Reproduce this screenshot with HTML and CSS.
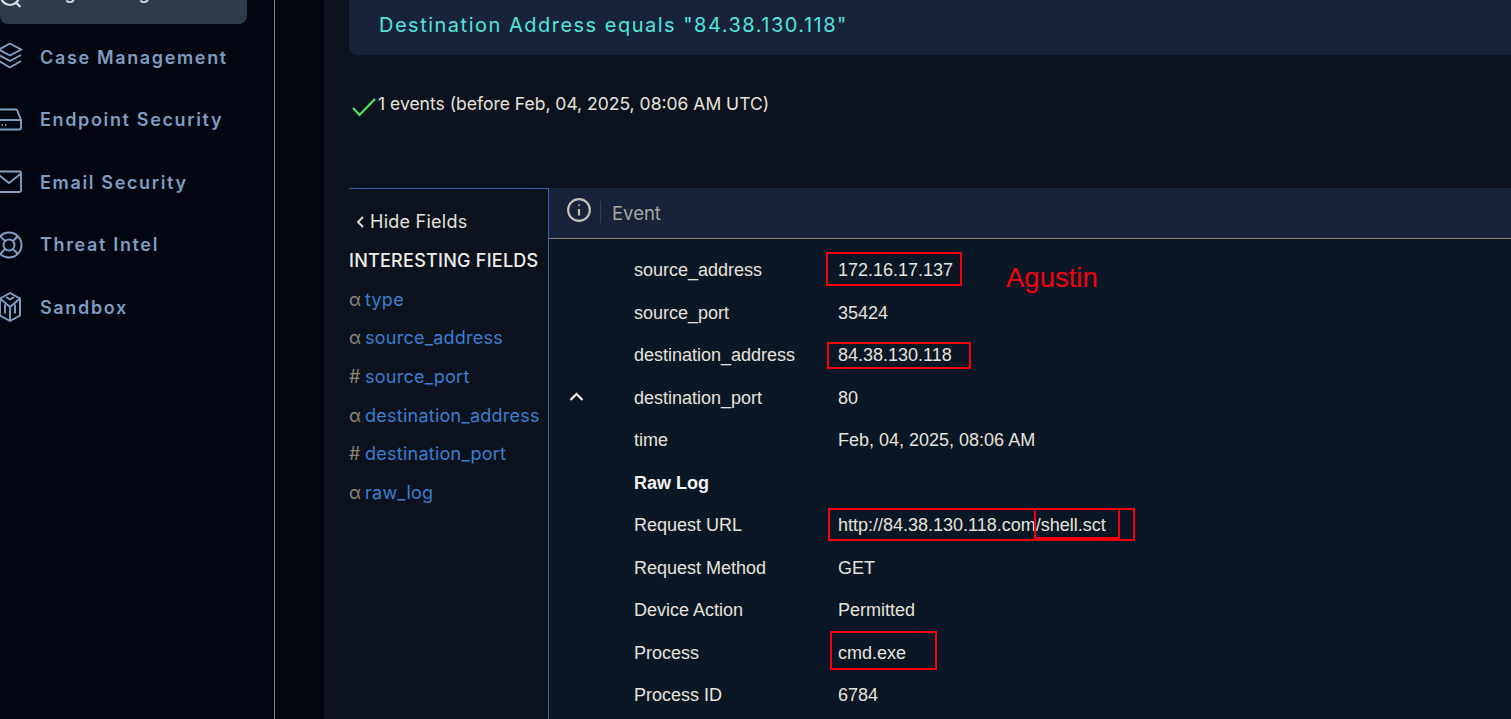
FILE: index.html
```html
<!DOCTYPE html>
<html lang="en">
<head>
<meta charset="utf-8">
<title>Log Management</title>
<link rel="stylesheet" href="styles.css">
</head>
<body>
<div class="app">
  <aside class="sidebar">
    <nav class="nav">
      <a class="nav-item active">
        <svg class="nav-icon" viewBox="-2 -15 24 30"><circle cx="10" cy="3" r="9"/><path d="M16 9.500l4.500 4.500"/></svg>
        <span>Log Management</span>
      </a>
      <a class="nav-item">
        <svg class="nav-icon" viewBox="-2 -15 24 30"><path d="M10-13.500l11 6-11 6-11-6z"/><path d="M21-2l-11 6-11-6"/><path d="M21 4l-11 6.500L-1 4"/></svg>
        <span>Case Management</span>
      </a>
      <a class="nav-item">
        <svg class="nav-icon" viewBox="-2 -15 24 30"><path d="M-2-10.500h17.500q1.500 0 2 1.500l3.500 9v7.500q0 2-2 2H-2"/><path d="M-2 0h23"/><path d="M1.500 5h1.200M5 5h1.200"/></svg>
        <span>Endpoint Security</span>
      </a>
      <a class="nav-item">
        <svg class="nav-icon" viewBox="-2 -15 24 30"><path d="M-2-10.500h21.500q1.500 0 1.500 1.500v17.500q0 1.500-1.500 1.500H-2"/><path d="M-2-7.500L9 1l11.500-9"/></svg>
        <span>Email Security</span>
      </a>
      <a class="nav-item">
        <svg class="nav-icon" viewBox="-2 -15 24 30"><circle cx="9" cy="0" r="12.500"/><circle cx="9" cy="0" r="5.500"/><path d="M0-9l5 5M18-9l-5 5M0 9l5-5M18 9l-5-5"/></svg>
        <span>Threat Intel</span>
      </a>
      <a class="nav-item">
        <svg class="nav-icon" viewBox="-2 -15 24 30"><path d="M10-14l10 5.500V8.500L10 14 0 8.500V-8.500z"/><path d="M0-8.500L10 0l10-8.500M10 0v14"/><path d="M5-2.500v9M15-2.500v9M6-10l4 2.500 4-2.500"/></svg>
        <span>Sandbox</span>
      </a>
    </nav>
  </aside>
  <div class="gutter"></div>
  <main class="main">
    <div class="query">Destination Address equals "84.38.130.118"</div>
    <div class="status">
      <svg class="check" viewBox="0 0 26 20"><path d="M2 11l6.500 7L24 2"/></svg>
      <span>1 events (before Feb, 04, 2025, 08:06 AM UTC)</span>
    </div>
    <section class="results">
      <div class="fields">
        <div class="field-row hide"><svg class="chev" viewBox="0 0 10 14"><path d="M8 2L3 7l5 5"/></svg>Hide Fields</div>
        <div class="field-row heading">INTERESTING FIELDS</div>
        <div class="field-row"><i class="kind">α</i><a>type</a></div>
        <div class="field-row"><i class="kind">α</i><a>source_address</a></div>
        <div class="field-row"><i class="kind">#</i><a>source_port</a></div>
        <div class="field-row"><i class="kind">α</i><a>destination_address</a></div>
        <div class="field-row"><i class="kind">#</i><a>destination_port</a></div>
        <div class="field-row"><i class="kind">α</i><a>raw_log</a></div>
      </div>
      <div class="event">
        <div class="event-head">
          <svg class="info" viewBox="0 0 24 24"><circle cx="12" cy="12" r="10"/><path d="M12 11v6M12 7v1"/></svg>
          <span class="event-sep"></span>
          <span class="event-title">Event</span>
        </div>
        <div class="event-body">
          <div class="toggle"><svg viewBox="0 0 16 10"><path d="M2 8l6-6 6 6"/></svg></div>
          <dl class="rows">
            <div class="row"><dt>source_address</dt><dd>172.16.17.137</dd></div>
            <div class="row"><dt>source_port</dt><dd>35424</dd></div>
            <div class="row"><dt>destination_address</dt><dd>84.38.130.118</dd></div>
            <div class="row"><dt>destination_port</dt><dd>80</dd></div>
            <div class="row"><dt>time</dt><dd>Feb, 04, 2025, 08:06 AM</dd></div>
            <div class="row"><dt class="strong">Raw Log</dt><dd></dd></div>
            <div class="row"><dt>Request URL</dt><dd>http://84.38.130.118.com/shell.sct</dd></div>
            <div class="row"><dt>Request Method</dt><dd>GET</dd></div>
            <div class="row"><dt>Device Action</dt><dd>Permitted</dd></div>
            <div class="row"><dt>Process</dt><dd>cmd.exe</dd></div>
            <div class="row"><dt>Process ID</dt><dd>6784</dd></div>
          </dl>
        </div>
      </div>
    </section>
  </main>
</div>
<div class="mark m1"></div>
<div class="mark m2"></div>
<div class="mark m3"></div>
<div class="mark m4"></div>
<div class="mark m5"></div>
<div class="note">Agustin</div>
</body>
</html>
```
FILE: styles.css
```css
* { box-sizing: border-box; }
html, body { margin: 0; height: 100%; overflow: hidden; background: #03060f; }
body { position: relative; font-family: Inter, "Liberation Sans", sans-serif; }

.app { display: flex; height: 719px; overflow: hidden; }

.sidebar {
  width: 275px;
  flex: none;
  background: #020611;
  border-right: 1px solid #8c8271;
}
.nav { margin-top: -39px; display: flex; flex-direction: column; }
.nav-item {
  display: flex;
  align-items: center;
  gap: 18px;
  height: 62.500px;
  width: 247px;
  color: #7f9dc0;
  font-size: 18px;
  font-weight: 600;
  letter-spacing: 1.650px;
  white-space: nowrap;
}
.nav-item.active {
  height: 63px;
  margin-bottom: 2px;
  background: #2f3b49;
  border-radius: 0 0 8px 8px;
  color: #c3d0de;
}
.nav-icon {
  width: 24px;
  height: 30px;
  margin-left: -2px;
  flex: none;
  overflow: visible;
  fill: none;
  stroke: #83a1c4;
  stroke-width: 1.900;
}
.active .nav-icon { stroke: #d5dde6; stroke-width: 2.200; }

.gutter { width: 49px; flex: none; background: #03060f; }

.main { flex: 1; min-width: 0; background: #0d131e; padding-left: 25px; }

.query {
  height: 55px;
  padding: 11px 0 0 30px;
  background: #18233a;
  border-radius: 0 0 0 8px;
  color: #52e6db;
  font-size: 20px;
  line-height: 28px;
  letter-spacing: 1.500px;
}

.status {
  display: flex;
  align-items: center;
  height: 24px;
  margin-top: 36px;
  color: #e6e3dc;
  font-size: 17.500px;
}
.check {
  width: 26px;
  height: 20px;
  margin: 8px 1px 0 2px;
  flex: none;
  fill: none;
  stroke: #4ee45e;
  stroke-width: 2.200;
}

.results { display: flex; margin-top: 73px; height: 531px; }

.fields {
  width: 200px;
  flex: none;
  padding-top: 13.500px;
  border-top: 1px solid #3566ab;
  border-right: 1px solid #3566ab;
}
.field-row {
  display: flex;
  align-items: center;
  height: 38.700px;
  color: #e6e3dc;
  font-size: 18px;
  letter-spacing: 0.250px;
  white-space: nowrap;
}
.hide { padding-left: 6px; }
.chev {
  width: 10px;
  height: 14px;
  margin-right: 5px;
  fill: none;
  stroke: #e6e3dc;
  stroke-width: 1.800;
}
.heading { color: #f0eee9; font-weight: 500; }
.kind { font-style: normal; color: #8b8578; width: 16px; flex: none; font-size: 18px; }
.field-row a { color: #3b7ed0; }

.event { flex: 1; min-width: 0; background: #0c1726; }
.event-head {
  display: flex;
  align-items: center;
  height: 51px;
  background: #18233a;
  border-bottom: 1px solid #8c8271;
  padding-left: 17px;
}
.info {
  width: 26px;
  height: 26px;
  margin-top: -6px;
  fill: none;
  stroke: #c5c1b8;
  stroke-width: 2;
}
.event-sep { width: 1px; height: 22px; margin: -2px 11px 0 8px; background: #343e50; }
.event-title { color: #a9a69c; font-size: 18.500px; }

.event-body { display: flex; padding-top: 10.500px; }
.toggle { width: 85px; flex: none; padding: 142px 0 0 19px; }
.toggle svg { display: block; width: 17px; height: 10px; fill: none; stroke: #f2f0ec; stroke-width: 2.200; }
.rows { margin: 0; font-family: "Liberation Sans", Arial, sans-serif; font-size: 18px; color: #e6e3dc; }
.row { display: flex; align-items: center; height: 42.500px; }
.row dt { width: 204px; flex: none; }
.row dd { margin: 0; white-space: nowrap; }
.strong { font-weight: 700; color: #f5f3ef; }

.mark { position: absolute; border: 2px solid #f5000e; }
.m1 { left: 826px; top: 252px; width: 136px; height: 34px; }
.m2 { left: 827px; top: 342px; width: 144px; height: 27px; }
.m3 { left: 828px; top: 508px; width: 307px; height: 33px; }
.m4 { left: 1034px; top: 508px; width: 86px; height: 31px; }
.m5 { left: 830px; top: 631px; width: 107px; height: 39px; }
.note {
  position: absolute;
  left: 1006px;
  top: 260px;
  color: #f5000e;
  font-family: "Liberation Sans", Arial, sans-serif;
  font-size: 27.500px;
  line-height: 36px;
}
```
